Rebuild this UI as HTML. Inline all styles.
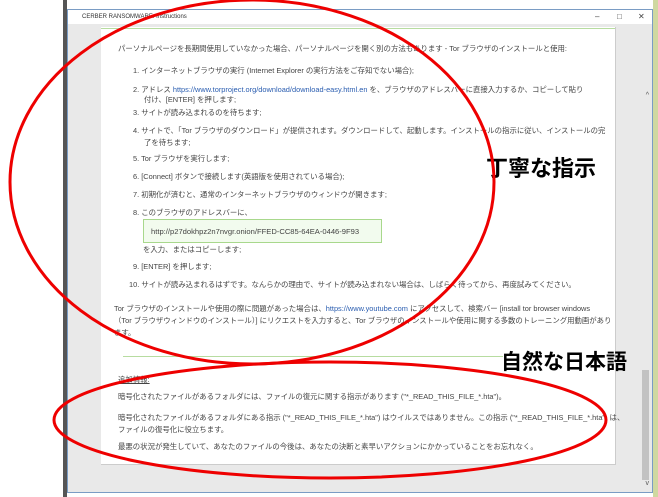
<!DOCTYPE html>
<html><head><meta charset="utf-8"><style>
body{margin:0;width:658px;height:497px;overflow:hidden;background:#fff;position:relative;font-family:"Liberation Sans","Noto Sans CJK JP",sans-serif;}
.win{position:absolute;left:67px;top:9px;width:586px;height:484px;background:#e9e9e9;border:1px solid #7a9cc4;box-sizing:border-box;}
.tb{position:absolute;left:0;top:0;right:0;height:14px;background:#fff;font-size:6px;color:#333;line-height:14px;padding-left:14px;}
.tb .ctl{position:absolute;top:0;font-size:8px;color:#444}
.page{position:absolute;left:33px;top:17px;width:514px;height:437px;background:#fff;border-right:1px solid #ccc;border-bottom:1px solid #ccc;}
.t{position:absolute;font-size:7.4px;color:#444;white-space:nowrap;}
a{color:#2a5db0;text-decoration:none}
.box{position:absolute;left:42px;top:192px;width:239px;height:24px;border:1px solid #a8d88c;background:#f2fbee;box-sizing:border-box;}
.lbl{position:absolute;font-weight:bold;color:#000;white-space:nowrap;}
</style></head><body>
<div style="position:absolute;left:63px;top:0;width:4px;height:497px;background:#555"></div>
<div style="position:absolute;left:653px;top:0;width:5px;height:497px;background:#cfd8a0"></div>
<div class="win">
<div class="tb">CERBER RANSOMWARE: Instructions<span class="ctl" style="left:527px">–</span><span class="ctl" style="left:549px">□</span><span class="ctl" style="left:570px">✕</span></div>
<div class="page">
<div style="position:absolute;left:0;top:1px;width:514px;height:1px;background:#b7dca0"></div>
<div class="t" style="left:17px;top:16px">パーソナルページを長期間使用していなかった場合、パーソナルページを開く別の方法もあります - Tor ブラウザのインストールと使用:</div>
<div class="t" style="left:32px;top:38px">1. インターネットブラウザの実行 (Internet Explorer の実行方法をご存知でない場合);</div>
<div class="t" style="left:32px;top:57px">2. アドレス <a>https://www.torproject.org/download/download-easy.html.en</a> を、ブラウザのアドレスバーに直接入力するか、コピーして貼り</div>
<div class="t" style="left:43px;top:67px">付け、[ENTER] を押します;</div>
<div class="t" style="left:32px;top:80px">3. サイトが読み込まれるのを待ちます;</div>
<div class="t" style="left:32px;top:98px">4. サイトで、「Tor ブラウザのダウンロード」が提供されます。ダウンロードして、起動します。インストールの指示に従い、インストールの完</div>
<div class="t" style="left:43px;top:110px">了を待ちます;</div>
<div class="t" style="left:32px;top:126px">5. Tor ブラウザを実行します;</div>
<div class="t" style="left:32px;top:144px">6. [Connect] ボタンで接続します(英語版を使用されている場合);</div>
<div class="t" style="left:32px;top:162px">7. 初期化が済むと、通常のインターネットブラウザのウィンドウが開きます;</div>
<div class="t" style="left:32px;top:180px">8. このブラウザのアドレスバーに、</div>
<div class="box"><div class="t" style="left:7px;top:7px;font-size:7.6px">http://p27dokhpz2n7nvgr.onion/FFED-CC85-64EA-0446-9F93</div></div>
<div class="t" style="left:42px;top:217px">を入力、またはコピーします;</div>
<div class="t" style="left:32px;top:234px">9. [ENTER] を押します;</div>
<div class="t" style="left:28px;top:252px">10. サイトが読み込まれるはずです。なんらかの理由で、サイトが読み込まれない場合は、しばらく待ってから、再度試みてください。</div>
<div class="t" style="left:13px;top:276px">Tor ブラウザのインストールや使用の際に問題があった場合は、<a>https://www.youtube.com</a> にアクセスして、検索バー [install tor browser windows</div>
<div class="t" style="left:13px;top:288px">（Tor ブラウザウィンドウのインストール）] にリクエストを入力すると、Tor ブラウザのインストールや使用に関する多数のトレーニング用動画があり</div>
<div class="t" style="left:13px;top:300px">ます。</div>
<div style="position:absolute;left:22px;top:329px;width:380px;height:1px;background:#b7dca0"></div>
<div class="t" style="left:17px;top:347px;text-decoration:underline">追加情報:</div>
<div class="t" style="left:17px;top:364px">暗号化されたファイルがあるフォルダには、ファイルの復元に関する指示があります ("*_READ_THIS_FILE_*.hta")。</div>
<div class="t" style="left:17px;top:385px">暗号化されたファイルがあるフォルダにある指示 ("*_READ_THIS_FILE_*.hta") はウイルスではありません。この指示 ("*_READ_THIS_FILE_*.hta") は、</div>
<div class="t" style="left:17px;top:397px">ファイルの復号化に役立ちます。</div>
<div class="t" style="left:17px;top:414px">最悪の状況が発生していて、あなたのファイルの今後は、あなたの決断と素早いアクションにかかっていることをお忘れなく。</div>
</div>
<div style="position:absolute;right:3px;top:82px;font-size:7px;color:#555">^</div>
<div style="position:absolute;right:3px;top:360px;width:7px;height:110px;background:#c2c2c2"></div>
<div style="position:absolute;right:3px;top:470px;font-size:7px;color:#555">v</div>
</div>
<div class="lbl" style="left:486px;top:151px;font-size:22px">丁寧な指示</div>
<div class="lbl" style="left:501px;top:346px;font-size:21px">自然な日本語</div>
<svg width="658" height="497" style="position:absolute;left:0;top:0">
<ellipse cx="252" cy="182" rx="242" ry="182" fill="none" stroke="#ee0000" stroke-width="3"/>
<ellipse cx="330" cy="420" rx="276" ry="58" fill="none" stroke="#ee0000" stroke-width="3"/>
</svg>
</body></html>
